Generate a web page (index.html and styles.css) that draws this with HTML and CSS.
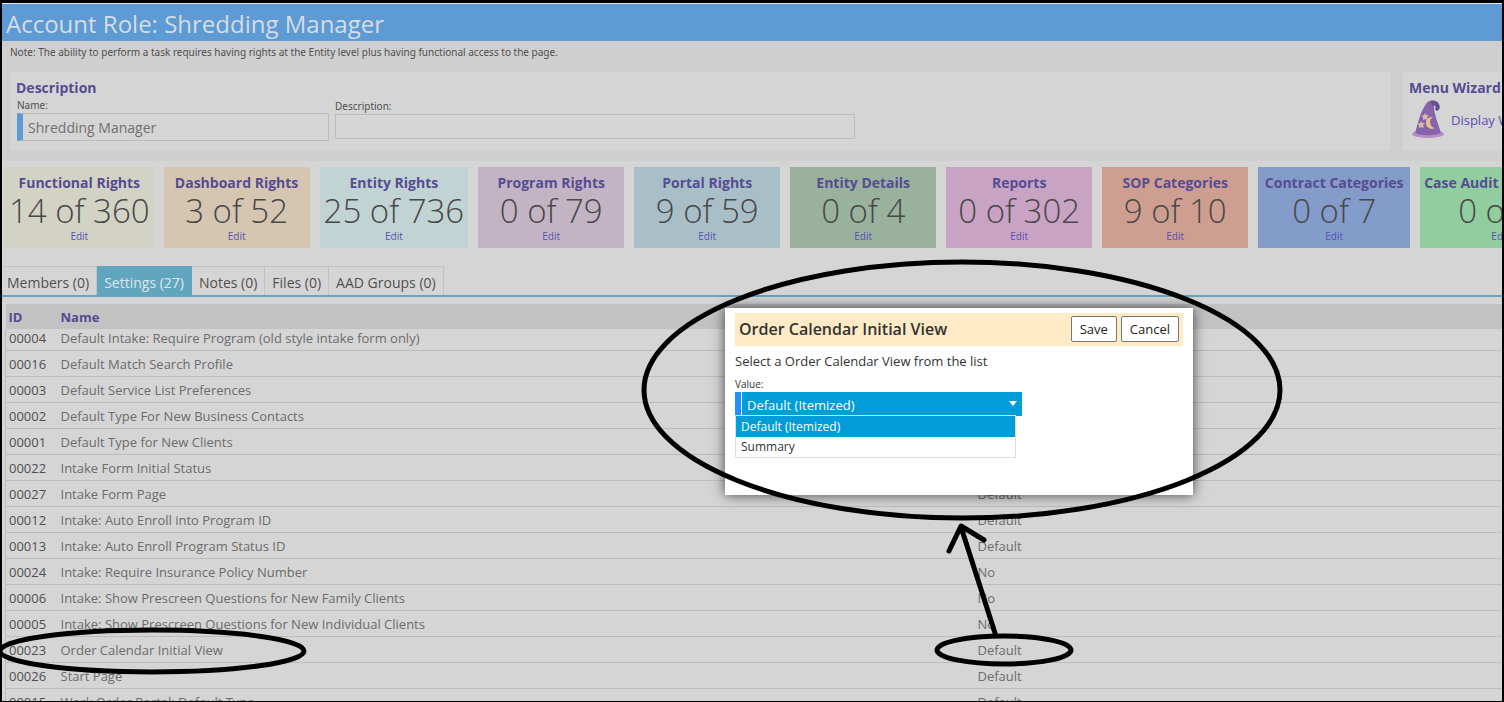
FILE: index.html
```html
<!DOCTYPE html>
<html lang="en">

<head>
    <meta charset="UTF-8">
    <meta name="viewport" content="width=device-width, initial-scale=1.0">
    <title>Account Role: Shredding Manager</title>
    <link rel="stylesheet" href="styles.css">
</head>

<body>
    <h1 class="page-title">Account Role: Shredding Manager</h1>

    <!-- Description and wizard panels -->
    <div class="intro">
        <p class="note">Note: The ability to perform a task requires having rights at the Entity level plus having functional access to the page.</p>
        <div class="panels">
            <section class="panel panel-main">
                <h2>Description</h2>
                <div class="fields">
                    <div class="field field-name">
                        <label for="role-name">Name:</label>
                        <input type="text" id="role-name" class="required" value="Shredding Manager">
                    </div>
                    <div class="field field-description">
                        <label for="role-description">Description:</label>
                        <input type="text" id="role-description">
                    </div>
                </div>
            </section>
            <section class="panel panel-wizard">
                <h2>Menu Wizard</h2>
                <a href="#" class="wizard-link">
                    <svg width="34" height="40" viewBox="0 0 34 40" aria-hidden="true">
                        <ellipse cx="17" cy="34" rx="16" ry="4" fill="#b48fc4"/>
                        <path d="M4 33 C7 24 9 12 15 4 C18 -1 26 -1 28 4 C30 9 27 12 25 10 C24 8 26 6 23 6 C23 14 27 23 30 33 C24 36 10 36 4 33Z" fill="#8663ab"/>
                        <path d="M20 1 C27 0 31 7 27 10 C24 12 24 8 25 7 C25 5 23 4 21 6Z" fill="#62508c"/>
                        <path d="M14 13 l1 2 3 0 -2 2 1 3 -3 -1 -2 1 0 -3 -2 -1 3 -1Z" fill="#d9bda8"/>
                        <path d="M10 21 l1 2 3 0 -2 2 1 3 -3 -1 -2 1 0 -3 -2 -1 3 -1Z" fill="#d9bda8"/>
                        <path d="M22 17 A6 6 0 1 0 24 28 A6 6 0 0 1 22 17Z" fill="#dfc391"/>
                    </svg>
                    Display Wizard
                </a>
            </section>
        </div>
    </div>

    <!-- Rights summary -->
    <div class="tiles">
        <div class="tile functional"><h3>Functional Rights</h3><span class="count">14 of 360</span><a href="#">Edit</a></div>
        <div class="tile dashboard"><h3>Dashboard Rights</h3><span class="count">3 of 52</span><a href="#">Edit</a></div>
        <div class="tile entity"><h3>Entity Rights</h3><span class="count">25 of 736</span><a href="#">Edit</a></div>
        <div class="tile program"><h3>Program Rights</h3><span class="count">0 of 79</span><a href="#">Edit</a></div>
        <div class="tile portal"><h3>Portal Rights</h3><span class="count">9 of 59</span><a href="#">Edit</a></div>
        <div class="tile details"><h3>Entity Details</h3><span class="count">0 of 4</span><a href="#">Edit</a></div>
        <div class="tile reports"><h3>Reports</h3><span class="count">0 of 302</span><a href="#">Edit</a></div>
        <div class="tile sop"><h3>SOP Categories</h3><span class="count">9 of 10</span><a href="#">Edit</a></div>
        <div class="tile contract"><h3>Contract Categories</h3><span class="count">0 of 7</span><a href="#">Edit</a></div>
        <div class="tile audit"><h3>Case Audit Categories</h3><span class="count">0 of 3</span><a href="#">Edit</a></div>
    </div>

    <nav class="tabs">
        <a href="#">Members (0)</a>
        <a href="#" class="active">Settings (27)</a>
        <a href="#">Notes (0)</a>
        <a href="#">Files (0)</a>
        <a href="#">AAD Groups (0)</a>
    </nav>

    <!-- Settings list -->
    <table class="settings">
        <thead>
            <tr><th class="col-id">ID</th><th class="col-name">Name</th><th>Value</th></tr>
        </thead>
        <tbody>
            <tr><td>00004</td><td>Default Intake: Require Program (old style intake form only)</td><td>No</td></tr>
            <tr><td>00016</td><td>Default Match Search Profile</td><td>Default</td></tr>
            <tr><td>00003</td><td>Default Service List Preferences</td><td>Default</td></tr>
            <tr><td>00002</td><td>Default Type For New Business Contacts</td><td>Default</td></tr>
            <tr><td>00001</td><td>Default Type for New Clients</td><td>Default</td></tr>
            <tr><td>00022</td><td>Intake Form Initial Status</td><td>Default</td></tr>
            <tr><td>00027</td><td>Intake Form Page</td><td>Default</td></tr>
            <tr><td>00012</td><td>Intake: Auto Enroll into Program ID</td><td>Default</td></tr>
            <tr><td>00013</td><td>Intake: Auto Enroll Program Status ID</td><td>Default</td></tr>
            <tr><td>00024</td><td>Intake: Require Insurance Policy Number</td><td>No</td></tr>
            <tr><td>00006</td><td>Intake: Show Prescreen Questions for New Family Clients</td><td>No</td></tr>
            <tr><td>00005</td><td>Intake: Show Prescreen Questions for New Individual Clients</td><td>No</td></tr>
            <tr><td>00023</td><td>Order Calendar Initial View</td><td>Default</td></tr>
            <tr><td>00026</td><td>Start Page</td><td>Default</td></tr>
            <tr><td>00015</td><td>Work Order Portal: Default Type</td><td>Default</td></tr>
        </tbody>
    </table>

    <!-- Edit dialog -->
    <div class="dialog" role="dialog" aria-labelledby="dialog-title">
        <div class="dialog-header">
            <h2 id="dialog-title">Order Calendar Initial View</h2>
            <button type="button">Save</button>
            <button type="button">Cancel</button>
        </div>
        <p>Select a Order Calendar View from the list</p>
        <label for="view-value">Value:</label>
        <div class="select-wrap">
            <select id="view-value">
                <option selected>Default (Itemized)</option>
                <option>Summary</option>
            </select>
        </div>
        <ul class="options" role="listbox" aria-label="Value">
            <li class="selected" role="option" aria-selected="true">Default (Itemized)</li>
            <li role="option" aria-selected="false">Summary</li>
        </ul>
    </div>

    <!-- Hand-drawn callouts -->
    <svg class="callouts" width="1504" height="702" viewBox="0 0 1504 702" aria-hidden="true">
        <ellipse cx="962" cy="390" rx="318" ry="128"/>
        <ellipse cx="152" cy="651" rx="152" ry="21"/>
        <ellipse cx="1004" cy="650" rx="67" ry="14"/>
        <path d="M995 633 L961 527 M949 551 L961 526 L984 540"/>
    </svg>
</body>

</html>
```
FILE: styles.css
```css
* {
    box-sizing: border-box;
}

body {
    position: relative;
    margin: 0;
    height: 100vh;
    overflow: hidden;
    border: 2px solid #000;
    border-top-width: 3px;
    border-bottom-width: 1px;
    background: #d5d5d5;
    color: #505050;
    font-family: "Open Sans", "Noto Sans", sans-serif;
    font-size: 13px;
}

h1, h2, h3, p, ul {
    margin: 0;
    padding: 0;
}

a {
    color: #5a50b8;
    text-decoration: none;
}

.page-title {
    height: 38px;
    padding-left: 4px;
    border-top: 1px solid #e4e4e4;
    background: #5e9ad3;
    color: #d5dde6;
    font-size: 24px;
    font-weight: 400;
    line-height: 40px;
}

.intro {
    height: 120px;
    background: #cfcfcf;
}

.note {
    padding: 3px 8px 0;
    font-family: "Noto Sans", sans-serif;
    font-size: 10px;
    line-height: 16px;
}

.panels {
    display: flex;
    gap: 12px;
    padding: 12px 0 0 8px;
}

.panel {
    height: 78px;
    padding: 7px 6px 0;
    background: #d5d5d5;
}

.panel-main {
    flex: 1;
}

.panel-wizard {
    width: 99px;
    overflow: hidden;
    white-space: nowrap;
}

.panel h2,
.tile h3 {
    color: #564c93;
    font-size: 14px;
    font-weight: 700;
    line-height: 18px;
}

.fields {
    display: flex;
    gap: 6px;
}

.field {
    padding-left: 1px;
}

.field label {
    display: block;
    font-family: "Noto Sans", sans-serif;
    font-size: 10px;
    line-height: 16px;
}

.field input {
    display: block;
    width: 100%;
    height: 28px;
    padding: 0 6px;
    border: 1px solid #bdbdbd;
    background: transparent;
    color: #707070;
    font: inherit;
    font-size: 14px;
}

.field input.required {
    padding-left: 5px;
    border-left: 6px solid #5e9ad3;
}

.field-name {
    width: 313px;
}

.field-description {
    width: 520px;
    padding: 1px 0 0;
}

.field-description input {
    height: 25px;
}

.wizard-link {
    display: flex;
    align-items: center;
    gap: 6px;
    padding: 3px 0 0 2px;
}

.wizard-link svg {
    flex: none;
}

.tiles {
    display: flex;
    gap: 10px;
    padding: 6px 0 0 3px;
}

.tile {
    flex: none;
    display: flex;
    flex-direction: column;
    align-items: center;
    min-width: 146px;
    height: 81px;
    padding: 7px 4px 0;
    white-space: nowrap;
}

.count {
    color: #484848;
    font-size: 33px;
    font-weight: 300;
    line-height: 37px;
}

.tile a {
    font-size: 10px;
    line-height: 14px;
}

.functional { background: #d3d3c5; }
.dashboard { background: #d5c6b1; }
.entity { background: #c2d3d4; }
.program { background: #c3b4c3; }
.portal { background: #a9bfc7; }
.details { background: #99b19d; }
.reports { background: #c8a3c3; }
.sop { background: #ce9f91; }
.contract { min-width: 152px; background: #849cc9; }
.audit { background: #92cd9f; }

.tabs {
    display: flex;
    height: 49px;
    padding-top: 18px;
    border-bottom: 2px solid #62a5bf;
}

.tabs a {
    padding: 0 7px;
    border-top: 1px solid #c3c3c3;
    border-right: 1px solid #c3c3c3;
    color: #505050;
    font-size: 14px;
    line-height: 32px;
}

.tabs a:first-child {
    padding-left: 5px;
}

.tabs a.active {
    border-color: #62a5bf;
    background: #62a5bf;
    color: #dde8ec;
}

.settings {
    width: calc(100% - 3px);
    margin: 7px 0 0 3px;
    border-collapse: collapse;
    table-layout: fixed;
}

.settings th {
    height: 25px;
    padding: 0 4px;
    background: #c2c2c2;
    color: #564c93;
    font-size: 13px;
    font-weight: 700;
    text-align: left;
}

.settings th:first-child,
.settings td:first-child {
    padding-left: 3px;
}

.settings .col-id {
    width: 51px;
}

.settings .col-name {
    width: 917px;
}

.settings td {
    height: 26px;
    padding: 2px 4px 0;
    border-bottom: 1px solid #bcbcbc;
    color: #6c6c6c;
    line-height: 23px;
    vertical-align: top;
}

.settings td:first-child {
    border-left: 1px solid #bcbcbc;
    color: #505050;
}

.settings tbody tr:first-child td {
    height: 21px;
    padding-top: 0;
    line-height: 18px;
}

.dialog {
    position: absolute;
    top: 305px;
    left: 723px;
    width: 468px;
    height: 187px;
    padding: 5px 10px;
    background: #fff;
    box-shadow: 0 0 12px rgba(0, 0, 0, 0.7);
    color: #333;
}

.dialog-header {
    display: flex;
    align-items: center;
    gap: 4px;
    height: 33px;
    padding: 0 4px 2px;
    background: #ffebc5;
}

.dialog-header h2 {
    flex: 1;
    font-size: 16px;
    font-weight: 600;
}

.dialog button {
    height: 26px;
    padding: 0 8px;
    border: 1px solid #777;
    border-radius: 2px;
    background: #fff;
    color: #222;
    font: inherit;
}

.dialog p {
    padding-top: 5px;
    line-height: 20px;
}

.dialog label {
    display: block;
    padding-top: 5px;
    font-size: 10px;
    line-height: 16px;
}

.select-wrap {
    position: relative;
    width: 287px;
}

.select-wrap::after {
    content: "";
    position: absolute;
    top: 9px;
    right: 5px;
    border: 4px solid transparent;
    border-top: 5px solid #fff;
    border-bottom: 0;
}

.dialog select {
    appearance: none;
    display: block;
    width: 100%;
    height: 24px;
    padding: 2px 6px 0;
    border: 0;
    border-left: 6px solid #1e90ff;
    border-radius: 0;
    background: #009dd9;
    box-shadow: inset 1px 0 #fff;
    color: #fff;
    font: inherit;
}

.options {
    position: relative;
    width: 281px;
    margin-top: -1px;
    border: 1px solid #ddd;
    list-style: none;
    font-size: 12px;
    line-height: 20px;
}

.options li {
    padding-left: 5px;
}

.options .selected {
    background: #009dd9;
    color: #fff;
    line-height: 21px;
}

.callouts {
    position: absolute;
    top: -3px;
    left: -2px;
    fill: none;
    stroke: #000;
    stroke-width: 5;
    stroke-linecap: round;
    stroke-linejoin: round;
    pointer-events: none;
}
```
